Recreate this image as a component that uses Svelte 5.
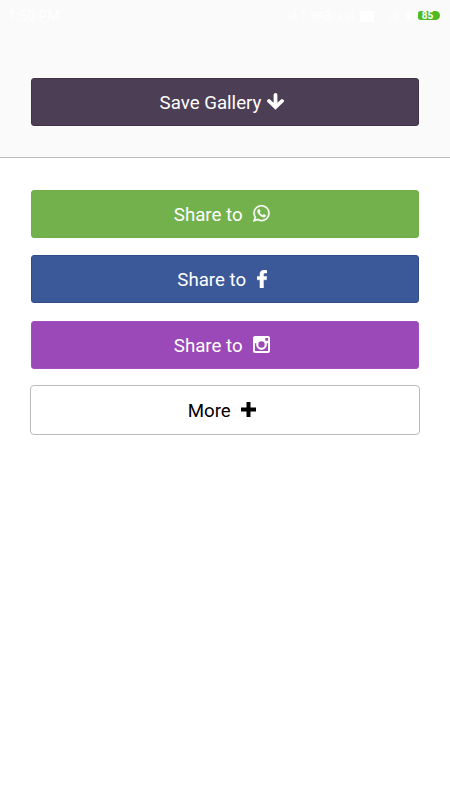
<script lang="ts">
  const shares = ['whatsapp', 'facebook', 'instagram']
</script>

<div class="screen">
  <header>
    <div class="status">
      <span>1:50 PM</span>
      <div class="right">
        <span>...ııl 1.3KB/s ııl</span>
        <i class="card"></i>
        <span class="signal">⁄ .ııl</span>
        <svg class="bolt" width="9" height="12" viewBox="0 0 9 12">
          <path d="M6 0L1 7H4L3 12L8 5H5z" fill="currentColor" />
        </svg>
        <b>85</b>
      </div>
    </div>
    <button class="save">
      Save Gallery
      <svg width="17" height="17" viewBox="0 0 17 17">
        <path d="M8.500 2V14M2 8L8.500 14.200L15 8" fill="none" stroke="currentColor" stroke-width="3.800" stroke-linecap="round" />
      </svg>
    </button>
  </header>

  <main>
    {#each shares as name}
      <button class={name}>
        Share to
        {#if name === 'whatsapp'}
          <svg width="17" height="17" viewBox="122 122 1576 1576">
            <path fill="currentColor" stroke="currentColor" stroke-width="30" d="M1113 974q13 0 97.500 44t89.500 53q2 5 2 15 0 33-17 76-16 39-71 65.500t-102 26.500q-57 0-190-62-98-45-170-118t-148-185q-72-107-71-194v-8q3-91 74-158 24-22 52-22 6 0 18 1.500t19 1.500q19 0 26.500 6.500t15.500 27.500q8 20 33 88t25 75q0 21-34.500 57.500t-34.500 46.500q0 7 5 15 34 73 102 137 56 53 151 101 12 7 22 7 15 0 54-48.500t52-48.500zm-203 530q127 0 243.500-50t200.500-134 134-200.500 50-243.500-50-243.500-134-200.500-200.500-134-243.500-50-243.500 50-200.500 134-134 200.500-50 243.500q0 203 120 368l-79 233 242-77q158 104 345 104zm0-1382q153 0 292.500 60t240.500 161 161 240.500 60 292.500-60 292.500-161 240.500-240.500 161-292.500 60q-195 0-365-94l-417 134 136-405q-108-178-108-389 0-153 60-292.500t161-240.500 240.500-161 292.500-60z" />
          </svg>
        {:else if name === 'facebook'}
          <svg width="10" height="18" viewBox="479 0 864 1664" preserveAspectRatio="none">
            <path fill="currentColor" stroke="currentColor" stroke-width="40" d="M1343 12v264h-157q-86 0-116 36t-30 108v189h293l-39 296h-254v759h-306v-759h-255v-296h255v-218q0-186 104-288.500t277-102.500q147 0 228 12z" />
          </svg>
        {:else}
          <svg width="17" height="17" viewBox="0 0 17 17">
            <path fill="currentColor" fill-rule="evenodd" d="M2 0h13a2 2 0 0 1 2 2v13a2 2 0 0 1-2 2H2a2 2 0 0 1-2-2V2a2 2 0 0 1 2-2zM1.900 7.200v7.200q0 .7.700.7h11.800q.7 0 .7-.7V7.200h-1.500a5.300 5.300 0 1 1-10.200 0zM12.300 1.900v2.900h2.800V1.900zM8.500 5.300a3.200 3.200 0 1 0 0 6.400a3.200 3.200 0 1 0 0-6.400z" />
          </svg>
        {/if}
      </button>
    {/each}
    <button class="more">
      More
      <svg width="15" height="15" viewBox="0 0 15 15">
        <path d="M7.500 0V15M0 7.500H15" stroke="currentColor" stroke-width="4" />
      </svg>
    </button>
  </main>
</div>

<style>
  :global(body) {
    margin: 0;
    background: #fff;
  }
  .screen {
    height: 800px;
    overflow: hidden;
    font-family: Roboto, sans-serif;
  }
  header {
    box-sizing: border-box;
    height: 158px;
    padding-bottom: 31.500px;
    background: #fafafa;
    border-bottom: 1px solid #bbb;
    display: flex;
    flex-direction: column;
    justify-content: space-between;
  }
  .status {
    display: flex;
    justify-content: space-between;
    height: 32px;
    padding: 0 10px 0 8px;
    align-items: center;
    color: #fff;
    font-size: 14px;
  }
  .right {
    display: flex;
    align-items: center;
    gap: 5px;
    font-size: 12px;
  }
  .card {
    width: 14px;
    height: 11px;
    background: #fff;
  }
  .status b {
    box-sizing: border-box;
    width: 22px;
    height: 9px;
    margin-top: -1px;
    border-radius: 3px 5px 5px 3px;
    background: #4fb922;
    padding-right: 3px;
    font-size: 10px;
    line-height: 10px;
    text-align: center;
  }
  button {
    box-sizing: border-box;
    width: 388px;
    height: 48px;
    margin: 0 auto;
    padding: 2px 6px 0 0;
    border: 1px solid transparent;
    border-radius: 3px;
    display: flex;
    align-items: center;
    justify-content: center;
    gap: 10.500px;
    color: #fff;
    font: 18.700px Roboto, sans-serif;
  }
  button svg {
    margin-top: -3px;
  }
  main {
    display: flex;
    flex-direction: column;
    gap: 17.500px;
    padding-top: 31.500px;
  }
  .save {
    gap: 6px;
    background: #4c3e54;
    border-color: #403348;
  }
  .whatsapp {
    background: #73b14d;
    border-color: #70ae4a;
  }
  .facebook {
    background: #3b5999;
    border-color: #2f4d88;
  }
  .instagram {
    background: #9b48b8;
    border-color: #a250bd;
  }
  .more {
    width: 390px;
    height: 50px;
    margin-top: -1px;
    border-color: #bbb;
    border-radius: 4px;
    background: #fff;
    color: #000;
  }
</style>
